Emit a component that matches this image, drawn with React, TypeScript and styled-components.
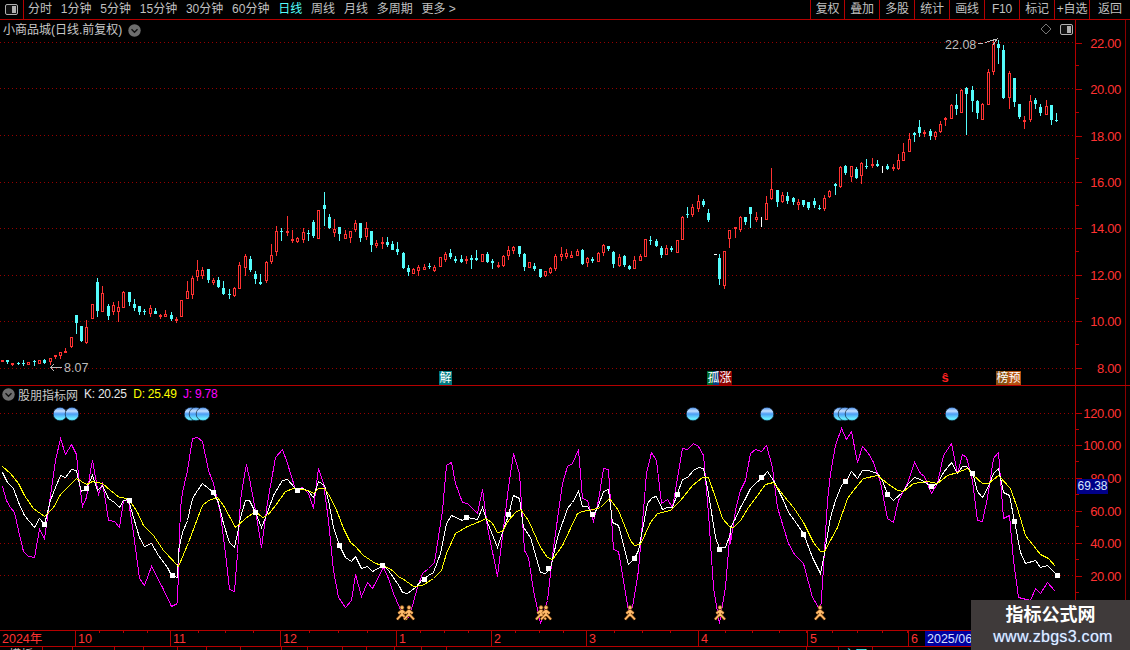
import React from "react";
import styled, { createGlobalStyle } from "styled-components";

const RED = "#ff3232";
const LINE = "#b40000";
const CYAN = "#54fcfc";
const GRID = "#960000";
const FONT = `"Liberation Sans", "Noto Sans CJK SC", sans-serif`;

/* candles as read from the chart: x, kind, wick top, body top, body bottom, wick bottom (3x px) */
type Candle = [number, string, number, number, number, number];
const partA: Candle[] = [
  [5,"r",541,541,545,545],[22,"c",541,541,547,552],[37,"r",549,549,552,557],[55,"c",545,548,552,555],
  [69,"c",540,549,551,558],[85,"r",546,546,554,554],[103,"c",540,543,546,558],[118,"r",541,541,551,551],
  [133,"c",537,540,550,553],[151,"r",534,534,545,555],[166,"r",526,526,531,537],[181,"r",517,517,527,537],
  [196,"r",504,513,516,516],[214,"r",472,472,501,503],[229,"c",405,405,429,462],[244,"c",438,438,484,486],
  [259,"r",420,441,489,492],[277,"r",373,373,416,416],[292,"c",294,306,392,411],[307,"r",318,340,395,395],
  [325,"c",372,378,408,420],[340,"r",366,376,396,405],[355,"r",363,382,396,426],[370,"r",333,336,383,384],
  [388,"c",336,336,365,378],[403,"c",357,372,384,393],[418,"c",378,378,396,405],[433,"c",387,393,396,405],
  [451,"r",375,384,402,411],[466,"c",384,393,402,402],[481,"r",402,404,407,417],[496,"r",390,402,411,411],
  [514,"c",396,405,417,423],[529,"r",411,417,423,429],[544,"r",361,361,411,411],[562,"r",303,333,357,357],
  [577,"r",288,294,345,357],[592,"r",240,270,291,303],[607,"r",261,270,288,297],[625,"c",267,267,300,309],
  [640,"r",294,300,309,315],[655,"c",291,300,321,324],[670,"c",303,324,342,345],[688,"c",327,342,344,357],
  [703,"r",321,324,348,351],[718,"r",246,255,326,327],[736,"r",222,228,264,288],[751,"c",228,237,270,276],
  [766,"c",273,282,297,312],[781,"c",282,306,312,315],[799,"r",243,246,303,309],[814,"r",192,225,246,252],
  [829,"r",138,153,216,228],[844,"c",144,153,156,183],[862,"r",108,153,159,168],[877,"r",150,177,183,189],
  [892,"r",171,174,186,189],[910,"r",144,156,180,189],[925,"c",150,160,163,183],[940,"c",120,126,168,174],
  [955,"r",91,91,177,177],[973,"c",36,75,87,138],[988,"c",102,111,144,147],[1003,"r",117,147,159,171],
  [1018,"c",141,141,162,183],[1036,"r",150,162,177,177],
];
const partB: Candle[] = [
  [0,"r",153,153,174,189],[16,"r",120,129,150,156],[31,"c",129,129,174,186],[49,"r",126,144,171,180],
  [64,"c",153,153,195,216],[79,"r",180,189,198,204],[97,"r",171,186,190,207],[112,"c",171,186,195,201],
  [127,"c",183,192,210,210],[142,"c",186,207,216,225],[160,"c",216,219,264,267],[175,"c",255,264,276,288],
  [190,"r",264,267,282,282],[205,"r",255,261,273,288],[223,"r",252,261,270,270],[238,"c",249,258,261,267],
  [253,"r",255,261,273,276],[271,"r",231,231,261,261],[286,"r",216,222,240,246],[301,"c",207,219,231,237],
  [316,"c",228,237,243,249],[334,"c",225,237,246,249],[349,"r",228,237,243,252],[364,"c",225,234,240,267],
  [379,"c",210,234,240,243],[397,"r",222,222,246,246],[412,"c",216,222,246,249],[427,"c",237,243,248,267],
  [445,"r",246,255,261,264],[460,"r",225,228,258,261],[475,"r",198,210,228,240],[490,"r",198,201,213,222],
  [508,"c",198,198,222,231],[523,"c",219,222,261,273],[538,"r",246,246,264,264],[553,"c",249,258,267,273],
  [571,"c",267,267,291,294],[586,"r",273,273,288,291],[601,"r",261,264,279,282],[616,"r",222,228,267,273],
  [634,"r",201,222,231,243],[649,"r",207,219,231,237],[664,"r",213,225,234,234],[682,"r",207,213,228,228],
  [697,"c",207,210,252,255],[712,"r",231,234,249,261],[727,"c",231,237,243,249],[745,"r",216,219,246,246],
  [760,"r",192,195,219,228],[775,"c",198,198,207,213],[790,"c",213,216,252,264],[808,"r",222,231,258,261],
  [823,"c",225,228,255,261],[838,"c",255,258,267,270],[853,"r",228,240,267,267],[871,"r",222,228,243,243],
  [886,"r",177,177,231,231],[901,"c",168,180,183,195],[919,"c",177,183,198,201],[934,"c",198,204,225,234],
  [949,"r",195,204,225,225],[964,"c",198,204,210,216],[982,"r",180,180,219,219],[997,"r",108,111,180,180],
  [1012,"c",81,103,105,114],[1027,"r",72,81,105,111],[1045,"r",45,63,87,96],[1060,"c",57,63,75,81],[1075,"c",87,99,120,126],
];
const partC: Candle[] = [
  [58,"c",672,684,747,765],[73,"r",663,663,768,777],[88,"r",600,600,627,654],[106,"r",592,592,598,624],
  [121,"r",558,561,600,606],[136,"c",561,561,576,585],[151,"c",531,531,552,594],[169,"r",546,561,570,576],
  [184,"w",561,561,591,591],[199,"r",498,519,570,570],[214,"r",414,477,507,510],[232,"c",480,480,516,531],
  [247,"r",486,495,516,519],[262,"c",486,498,513,522],[280,"c",501,504,516,525],[295,"r",507,516,525,540],
  [310,"c",510,510,525,531],[325,"c",516,516,534,540],[343,"c",504,513,525,534],[358,"c",525,534,537,540],
  [373,"r",495,504,537,543],[388,"r",480,483,501,504],[406,"c",459,462,467,495],[421,"r",408,411,471,474],
  [436,"c",405,408,429,435],[454,"r",408,408,441,456],[469,"c",411,417,444,447],[484,"r",396,399,438,462],
  [499,"c",387,408,411,417],[517,"r",384,402,408,414],[532,"c",390,402,408,411],[547,"w",408,408,429,429],
  [562,"c",402,408,417,420],[580,"r",402,411,417,423],[595,"r",372,390,417,420],[610,"r",339,366,393,393],
  [628,"r",309,327,366,366],[643,"c",306,309,315,336],[658,"c",270,291,309,321],[673,"r",300,306,312,321],
  [691,"c",297,303,318,330],[706,"r",303,306,321,330],[721,"r",273,282,306,309],[736,"r",261,264,270,288],
  [754,"r",222,225,267,267],[769,"c",192,225,237,255],[784,"r",177,180,249,249],[799,"c",171,174,192,315],
  [817,"c",168,180,213,246],[832,"c",210,213,249,267],[847,"r",219,222,270,270],[865,"r",117,126,225,225],
  [880,"r",30,42,126,135],[895,"c",30,42,54,102],[910,"c",45,60,204,207],[928,"r",123,129,204,237],
  [943,"c",144,144,216,231],[958,"c",222,222,261,267],[973,"r",258,270,273,297],[991,"r",195,213,270,276],
  [1006,"c",204,210,222,237],[1021,"c",222,231,249,258],[1039,"r",210,228,255,255],[1054,"c",225,225,270,285],
  [1069,"c",249,270,273,276],
];

const place = (list: Candle[], ox: number, oy: number) =>
  list.map(([x, kind, wt, bt, bb, wb]) => ({
    x: Math.round(ox + x / 3),
    kind,
    wt: Math.round(oy + wt / 3),
    bt: Math.round(oy + bt / 3),
    bb: Math.round(oy + bb / 3),
    wb: Math.round(oy + wb / 3),
  }));
const candles = [...place(partA, 0, 180), ...place(partB, 350, 180), ...place(partC, 700, 30)];

/* kdj lines in three zoomed stretches, flat x,y lists */
const J1 = [7,198,18,240,30,262,42,275,55,330,70,392,85,408,103,412,118,328,133,355,165,120,181,55,196,103,214,73,229,103,235,165,240,210,247,257,259,232,270,150,277,120,285,170,294,222,305,190,315,240,325,300,342,302,356,320,368,240,385,240,400,340,418,475,433,496,452,438,485,500,514,558,530,548,534,440,540,265,547,215,560,150,577,55,592,52,607,62,625,150,640,190,660,280,675,400,688,508,702,512,712,400,720,240,730,180,737,133,748,175,765,270,783,380,800,245,825,110,845,88,862,130,885,208,907,200,925,220,940,265,955,143,970,190,985,300,1000,450,1015,530,1035,560,1052,540,1066,462,1082,528,1100,485,1115,505,1148,442,1165,475,1178,520,1197,560];
const J2 = [70,590,85,590,95,555,110,500,125,460,145,445,163,425,185,270,197,135,212,127,225,190,245,247,260,248,290,280,307,208,320,320,350,468,385,200,400,100,418,160,432,390,445,410,460,510,480,610,500,540,520,380,545,190,560,137,575,130,593,88,607,235,622,240,638,302,655,240,670,143,685,148,700,388,715,392,745,570,757,560,775,450,797,160,812,97,828,120,843,250,860,237,875,260,905,85,922,88,938,70,955,78,968,105,985,280,1000,500,1018,610,1035,500,1050,320];
const J3 = [30,370,45,270,60,210,75,180,90,100,105,88,122,92,138,75,155,140,170,260,190,320,205,370,222,402,250,430,275,530,300,570,305,490,320,240,330,160,345,75,362,25,378,58,393,32,410,125,425,78,445,100,460,125,480,185,502,295,520,307,535,240,560,190,582,125,600,160,612,168,632,218,650,190,670,105,692,70,710,160,725,103,738,110,755,180,770,300,787,302,800,230,820,115,835,97,850,295,866,285,880,420,895,530,930,540,945,503,960,518,980,485,1005,512];
const K1 = [7,155,20,185,40,205,55,245,72,285,103,320,118,295,133,312,150,240,165,200,181,165,196,170,214,148,229,150,235,180,243,212,259,205,277,165,290,210,305,195,325,235,342,245,358,262,368,240,385,238,400,290,418,350,433,378,452,370,475,405,500,440,514,465,530,472,535,390,547,335,560,300,577,235,590,210,607,190,625,205,640,215,655,245,670,310,688,365,703,382,712,340,720,290,735,240,748,240,765,275,783,320,800,275,820,225,845,180,860,178,885,205,910,205,925,212,940,232,955,183,972,195,985,240,1000,320,1018,375,1035,410,1052,422,1066,407,1082,443,1100,437,1115,452,1148,435,1165,450,1197,497];
const K2 = [65,517,82,520,105,500,130,475,160,455,180,400,197,310,212,285,245,300,260,292,290,298,305,262,320,305,350,380,375,310,385,285,400,225,418,235,430,320,450,350,480,455,495,458,510,445,530,350,560,265,575,245,593,213,607,258,622,258,638,285,655,255,670,212,685,208,697,305,715,315,745,432,762,415,775,390,800,250,815,230,828,228,845,268,860,262,875,262,905,178,922,170,938,150,955,142,968,145,985,220,1005,350,1018,385,1035,380,1050,340];
const K3 = [30,320,45,295,60,260,75,235,90,205,105,190,125,170,140,153,160,180,190,240,205,275,222,300,250,340,275,410,300,458,312,400,330,290,345,240,362,195,378,180,393,153,410,175,425,150,445,150,470,160,485,180,502,222,520,240,545,215,565,190,582,172,600,178,632,197,650,190,670,155,692,127,710,160,725,137,738,137,755,155,770,212,787,230,800,205,820,160,835,145,850,215,866,225,883,302,900,395,915,428,945,420,960,440,980,435,1010,465];
const D1 = [7,137,30,160,55,190,72,225,100,265,133,288,160,260,181,222,229,175,259,193,277,183,305,188,330,210,358,232,385,235,410,275,430,315,460,345,490,390,533,438,565,365,590,295,607,255,625,240,650,232,670,255,705,320,735,295,765,272,785,290,800,285,825,255,855,212,880,205,925,210,940,218,955,205,972,205,990,230,1010,275,1030,325,1050,365,1066,378,1090,405,1125,430,1148,435,1175,450,1197,470];
const D2 = [65,475,100,498,125,495,160,475,182,450,197,400,225,340,260,318,290,305,317,295,335,310,350,337,365,332,385,300,405,275,420,268,445,300,480,380,500,410,515,418,545,375,590,280,605,272,640,268,660,262,687,235,715,270,750,360,762,375,780,372,810,305,830,280,870,270,900,240,935,195,965,170,985,172,1005,230,1025,295,1050,322];
const D3 = [38,320,60,300,85,260,110,225,135,192,160,185,190,225,220,262,250,305,280,365,300,392,312,392,350,320,380,235,400,210,430,175,470,165,500,190,530,210,550,212,580,190,620,183,650,190,680,165,710,155,740,145,760,165,785,190,805,188,835,165,870,205,890,265,915,345,960,403,985,415,1005,437];

const toPts = (flat: number[], ox: number) => {
  const out: string[] = [];
  for (let i = 0; i < flat.length; i += 2) out.push(`${Math.round(ox + flat[i] / 3) + 0.5},${Math.round(420 + flat[i + 1] / 3) + 0.5}`);
  return out.join(" ");
};
const line = (a: number[], b: number[], c: number[]) => `${toPts(a, 0)} ${toPts(b, 380)} ${toPts(c, 720)}`;

const markers: [number, number][] = [
  [44,524],[86,488],[129,500],[172,575],[213,492],[255,512],[297,490],[339,545],[382,565],
  [424,579],[466,517],[508,514],[548,568],[592,514],[634,558],[677,494],[719,549],[761,477],[803,534],[845,481],[887,494],[931,486],[972,473],[1014,521],[1057,575],
];
const balls = [60, 72, 191, 196, 203, 693, 767, 840, 845, 852, 952];
const people = [402, 409, 541, 546, 630, 720, 820];

const mainGrid = [42, 88, 135, 182, 228, 275, 321, 368];
const subGrid = [413, 445, 478, 510, 543, 575];

const GlobalStyle = createGlobalStyle`
  html, body { margin: 0; padding: 0; background: #000; }
`;
const Page = styled.div`
  position: relative;
  width: 1130px;
  height: 650px;
  overflow: hidden;
  background: #000;
  font-family: ${FONT};
  display: flex;
  flex-direction: column;
`;
const Toolbar = styled.div`
  display: flex;
  height: 19px;
  border-bottom: 1px solid ${LINE};
  color: #c0c0c0;
  font-size: 12px;
  line-height: 19px;
`;
const ToggleBox = styled.div`
  width: 23px;
  border-right: 1px solid ${LINE};
  display: flex;
  align-items: center;
  justify-content: center;
`;
const PeriodList = styled.div`
  display: flex;
  flex: 1;
  gap: 8.8px;
  padding-left: 4px;
`;
const Period = styled.span<{ $active?: boolean }>`
  color: ${(p) => (p.$active ? CYAN : "#c0c0c0")};
  white-space: nowrap;
`;
const ActionButton = styled.div<{ $w: number }>`
  width: ${(p) => p.$w}px;
  box-sizing: border-box;
  border-left: 1px solid ${LINE};
  text-align: center;
  white-space: nowrap;
  letter-spacing: ${(p) => (p.$w > 40 ? 0 : -0.2)}px;
`;
const Row = styled.div<{ $h: number }>`
  display: flex;
  height: ${(p) => p.$h}px;
`;
const ChartArea = styled.div`
  position: relative;
  width: 1075px;
  overflow: hidden;
`;
const Separator = styled.div`
  height: 1px;
  background: ${LINE};
`;
const Axis = styled.div<{ $offset: number }>`
  position: relative;
  width: 49px;
  box-sizing: content-box;
  border-left: 1px solid ${LINE};
  border-right: 1px solid #8a0000;
  padding-top: ${(p) => p.$offset}px;
  overflow: hidden;
`;
const AxisRow = styled.div<{ $h: number }>`
  position: relative;
  height: ${(p) => p.$h}px;
  display: flex;
  align-items: center;
  justify-content: space-between;
  &::after {
    content: "";
    position: absolute;
    left: 0;
    bottom: 0;
    width: 3px;
    height: 1px;
    background: ${LINE};
  }
`;
const Tick = styled.i`
  display: block;
  width: 6px;
  height: 1px;
  background: ${LINE};
`;
const AxisLabel = styled.span`
  padding-right: 4px;
  color: ${RED};
  font-size: 13px;
  letter-spacing: -0.35px;
`;
const ValueBox = styled.div`
  position: absolute;
  left: 1px;
  top: 93px;
  width: 31px;
  height: 15px;
  background: #000088;
  color: #d8e8ff;
  font-size: 12px;
  line-height: 15px;
  text-align: center;
`;
const ChartTitle = styled.div`
  position: absolute;
  left: 3px;
  top: 2px;
  display: flex;
  align-items: center;
  gap: 6px;
  color: #c8c8c8;
  font-size: 12px;
  line-height: 16px;
`;
const CornerIcons = styled.div`
  position: absolute;
  right: 2px;
  top: 3px;
  display: flex;
  align-items: center;
  gap: 8px;
`;
const Legend = styled.div`
  position: absolute;
  left: 2px;
  top: 0;
  display: flex;
  align-items: center;
  height: 16px;
  font-size: 12px;
  white-space: nowrap;
`;
const LegendName = styled.span`
  margin: 0 6px 0 3px;
  color: #c8c8c8;
`;
const LegendValue = styled.span<{ $color: string }>`
  margin-right: 6.5px;
  color: ${(p) => p.$color};
  letter-spacing: -0.25px;
`;
const PriceNote = styled.span<{ $x: number; $y: number }>`
  position: absolute;
  left: ${(p) => p.$x}px;
  top: ${(p) => p.$y}px;
  color: #bdbdbd;
  font-size: 12.5px;
  line-height: 14px;
`;
const Signal = styled.div<{ $x: number; $bg: string; $fg?: string }>`
  position: absolute;
  left: ${(p) => p.$x}px;
  bottom: 0;
  height: 14px;
  padding: 0 0.5px;
  background: ${(p) => p.$bg};
  color: ${(p) => p.$fg || "#fff"};
  font-size: 12px;
  line-height: 14px;
  white-space: nowrap;
`;
const StopMark = styled(Signal)`
  font-size: 13px;
  font-weight: 700;
  line-height: 13px;
`;
const TimeAxis = styled.div`
  display: flex;
  height: 15px;
  border-top: 1px solid ${LINE};
  border-bottom: 1px solid ${LINE};
`;
const MonthCell = styled.div<{ $w: number; $step?: number; $first?: boolean }>`
  width: ${(p) => p.$w}px;
  box-sizing: border-box;
  padding-left: 2px;
  border-left: ${(p) => (p.$first ? "0" : `1px solid ${LINE}`)};
  color: ${RED};
  font-size: 12.5px;
  line-height: 16px;
  background: ${(p) =>
    p.$step
      ? `repeating-linear-gradient(to right, transparent 0 ${p.$step - 1}px, ${LINE} ${p.$step - 1}px ${p.$step}px) 0 0 / 100% 2px no-repeat`
      : "none"};
`;
const CursorDate = styled.div`
  width: 80px;
  padding-left: 2px;
  background: #0000a0;
  color: #d8e0ff;
  font-size: 12.5px;
  line-height: 16px;
  white-space: nowrap;
  overflow: hidden;
`;
const TabStrip = styled.div`
  display: flex;
  height: 3px;
  overflow: hidden;
`;
const Tab = styled.div<{ $w: number; $color?: string }>`
  width: ${(p) => p.$w}px;
  box-sizing: border-box;
  border-right: 1px solid ${LINE};
  padding-top: 1px;
  color: ${(p) => p.$color || "#c0c0c0"};
  font-size: 12px;
  line-height: 14px;
  text-align: center;
  overflow: hidden;
  white-space: nowrap;
`;
const Watermark = styled.div`
  position: absolute;
  right: 0;
  bottom: 0;
  width: 159px;
  height: 50px;
  background: #3f3a3a;
  display: flex;
  flex-direction: column;
  align-items: center;
  justify-content: center;
  color: #fff;
`;
const MarkName = styled.div`
  font-size: 18px;
  font-weight: 700;
  line-height: 24px;
`;
const MarkUrl = styled.div`
  padding-left: 5px;
  font-size: 16px;
  letter-spacing: 0.3px;
  line-height: 20px;
  color: #e4eeff;
  text-shadow: 0 0 1px #5a98f0;
`;
const PaneSvg = styled.svg`
  display: block;
`;

const Chevron: React.FC = () => (
  <svg width="13" height="13" viewBox="0 0 13 13">
    <circle cx="6.5" cy="6.5" r="6.2" fill="#6e6e6e" />
    <path d="M3.5 5.2 L6.5 8.2 L9.5 5.2" fill="none" stroke="#101010" strokeWidth="1.4" />
  </svg>
);

const SplitIcon: React.FC = () => (
  <svg width="13" height="11" viewBox="0 0 13 11">
    <rect x="0.5" y="0.5" width="12" height="10" rx="1.5" fill="#111" stroke="#b0b0b0" />
    <rect x="7" y="2" width="4" height="7" fill="#b0b0b0" />
  </svg>
);

const Person: React.FC<{ x: number }> = ({ x }) => (
  <g transform={`translate(${x} 613)`}>
    <path d="M0 -3 L0 1.5 M0 -2.5 L-3.6 0.5 M0 -2.5 L3.6 0.5 M0 1 L-5 6.5 M0 1 L5 6.5" fill="none" stroke="#7a4310" strokeWidth="3" />
    <path d="M0 -3 L0 1.5 M0 -2.5 L-3.6 0.5 M0 -2.5 L3.6 0.5 M0 1 L-5 6.5 M0 1 L5 6.5" fill="none" stroke="#ffbc6c" strokeWidth="1.8" />
    <circle cx="0" cy="-5.4" r="2" fill="#ffbc6c" stroke="#7a4310" strokeWidth="0.7" />
  </g>
);

const PriceAxis: React.FC<{ labels: string[]; h: number; offset: number; value?: string }> = ({ labels, h, offset, value }) => (
  <Axis $offset={offset}>
    {labels.map((l) => (
      <AxisRow key={l} $h={h}>
        <Tick />
        <AxisLabel>{l}</AxisLabel>
      </AxisRow>
    ))}
    {value && <ValueBox>{value}</ValueBox>}
  </Axis>
);

const periods = ["分时", "1分钟", "5分钟", "15分钟", "30分钟", "60分钟", "日线", "周线", "月线", "多周期", "更多 >"];
const actions: [string, number][] = [["复权", 34], ["叠加", 35], ["多股", 35], ["统计", 35], ["画线", 35], ["F10", 35], ["标记", 35], ["+自选", 35], ["返回", 41]];
const months: [string, number, number][] = [["10", 95, 24], ["11", 110, 27.5], ["12", 116, 29], ["1", 95, 24], ["2", 95, 24], ["3", 112, 28], ["4", 109, 27], ["5", 101, 25], ["6", 17, 0]];
const tabs: [string, number, string?][] = [["模板", 43], ["", 30], ["", 42], ["", 29], ["", 34], ["", 29], ["", 34], ["", 41], ["", 26], ["", 35], ["", 24], ["", 28], ["", 27], ["", 25], ["", 360], ["", 32], ["主图", 34, CYAN]];

const App: React.FC = () => (
  <Page>
    <GlobalStyle />
    <Toolbar>
      <ToggleBox>
        <SplitIcon />
      </ToggleBox>
      <PeriodList>
        {periods.map((p) => (
          <Period key={p} $active={p === "日线"}>{p}</Period>
        ))}
      </PeriodList>
      {actions.map(([a, w]) => (
        <ActionButton key={a} $w={w}>{a}</ActionButton>
      ))}
    </Toolbar>
    <Row $h={365}>
      <ChartArea>
        <PaneSvg width="1075" height="365" viewBox="0 20 1075 365">
          {mainGrid.map((y) => (
            <line key={y} x1="0" x2="1075" y1={y + 0.5} y2={y + 0.5} stroke={GRID} strokeDasharray="1 3" />
          ))}
          <g shapeRendering="crispEdges">
            {candles.map((c, i) => {
              const color = c.kind === "r" ? RED : c.kind === "w" ? "#fff" : CYAN;
              const h = Math.max(c.bb - c.bt, 1);
              return (
                <g key={i}>
                  <rect x={c.x} y={c.wt} width="1" height={Math.max(c.wb - c.wt, 1)} fill={color} />
                  {c.kind === "w" ? null : c.kind === "r" ? (
                    <rect x={c.x - 0.5} y={c.bt + 0.5} width="2" height={Math.max(h - 1, 1)} fill="#000" stroke={color} />
                  ) : (
                    <rect x={c.x - 1} y={c.bt} width="3" height={h} fill={color} />
                  )}
                </g>
              );
            })}
            <rect x="714" y="254" width="3" height="1" fill="#fff" />
            <path d="M50.5 367.5 H62 M50.5 367.5 L54 364 M50.5 367.5 L54 371" fill="none" stroke="#bdbdbd" />
            <path d="M978 44 L983 43 M985 42.5 L990 41 L997 39 L993 45" fill="none" stroke="#bdbdbd" />
          </g>
        </PaneSvg>
        <ChartTitle>
          小商品城(日线.前复权)
          <Chevron />
        </ChartTitle>
        <CornerIcons>
          <svg width="12" height="12" viewBox="0 0 12 12">
            <path d="M6 1 L11 6 L6 11 L1 6 Z" fill="none" stroke="#777" />
          </svg>
          <SplitIcon />
        </CornerIcons>
        <PriceNote $x={64} $y={341}>8.07</PriceNote>
        <PriceNote $x={945} $y={18}>22.08</PriceNote>
        <Signal $x={439} $bg="#007a80">解</Signal>
        <Signal $x={707} $bg="linear-gradient(to right, #006a2e 0 6px, #003c80 6px 12px, #8a0000 12px)">孤涨</Signal>
        <StopMark $x={941} $bg="transparent" $fg="#ff2020">ŝ</StopMark>
        <Signal $x={996} $bg="linear-gradient(to right, #8a5010 0 12px, #b4500f 12px)">榜预</Signal>
      </ChartArea>
      <PriceAxis labels={["22.00", "20.00", "18.00", "16.00", "14.00", "12.00", "10.00", "8.00"]} h={46.43} offset={0} />
    </Row>
    <Separator />
    <Row $h={244}>
      <ChartArea>
        <PaneSvg width="1075" height="244" viewBox="0 386 1075 244">
          <defs>
            <linearGradient id="ballFill" x1="0" y1="0" x2="0" y2="1">
              <stop offset="0" stopColor="#3f86e6" />
              <stop offset="0.28" stopColor="#c4e0ff" />
              <stop offset="0.5" stopColor="#4d9df5" />
              <stop offset="0.85" stopColor="#6aeeff" />
              <stop offset="1" stopColor="#3fbfe0" />
            </linearGradient>
          </defs>
          {subGrid.map((y) => (
            <line key={y} x1="0" x2="1075" y1={y + 0.5} y2={y + 0.5} stroke={GRID} strokeDasharray="1 3" />
          ))}
          <g shapeRendering="crispEdges">
            <polyline points={line(J1, J2, J3)} fill="none" stroke="#ff00ff" />
            <polyline points={line(K1, K2, K3)} fill="none" stroke="#ffffff" />
            <polyline points={line(D1, D2, D3)} fill="none" stroke="#ffff00" />
            {markers.map(([x, y]) => (
              <rect key={x} x={x - 2} y={y - 2} width="5" height="5" fill="#fff" />
            ))}
          </g>
          {balls.map((x) => (
            <circle key={x} cx={x} cy="414" r="6.8" fill="url(#ballFill)" stroke="#04101c" strokeWidth="0.6" />
          ))}
          {people.map((x) => (
            <Person key={x} x={x} />
          ))}
        </PaneSvg>
        <Legend>
          <Chevron />
          <LegendName>股朋指标网</LegendName>
          <LegendValue $color="#e8e8e8">K: 20.25</LegendValue>
          <LegendValue $color="#ffff00">D: 25.49</LegendValue>
          <LegendValue $color="#ff00ff">J: 9.78</LegendValue>
        </Legend>
      </ChartArea>
      <PriceAxis labels={["120.00", "100.00", "80.00", "60.00", "40.00", "20.00"]} h={32.6} offset={11} value="69.38" />
    </Row>
    <TimeAxis>
      <MonthCell $w={75} $first>2024年</MonthCell>
      {months.map(([m, w, step]) => (
        <MonthCell key={m} $w={w} $step={step}>{m}</MonthCell>
      ))}
      <CursorDate>2025/06/25</CursorDate>
    </TimeAxis>
    <TabStrip>
      {tabs.map(([t, w, c], i) => (
        <Tab key={i} $w={w} $color={c}>{t}</Tab>
      ))}
    </TabStrip>
    <Watermark>
      <MarkName>指标公式网</MarkName>
      <MarkUrl>www.zbgs3.com</MarkUrl>
    </Watermark>
  </Page>
);

export default App;
